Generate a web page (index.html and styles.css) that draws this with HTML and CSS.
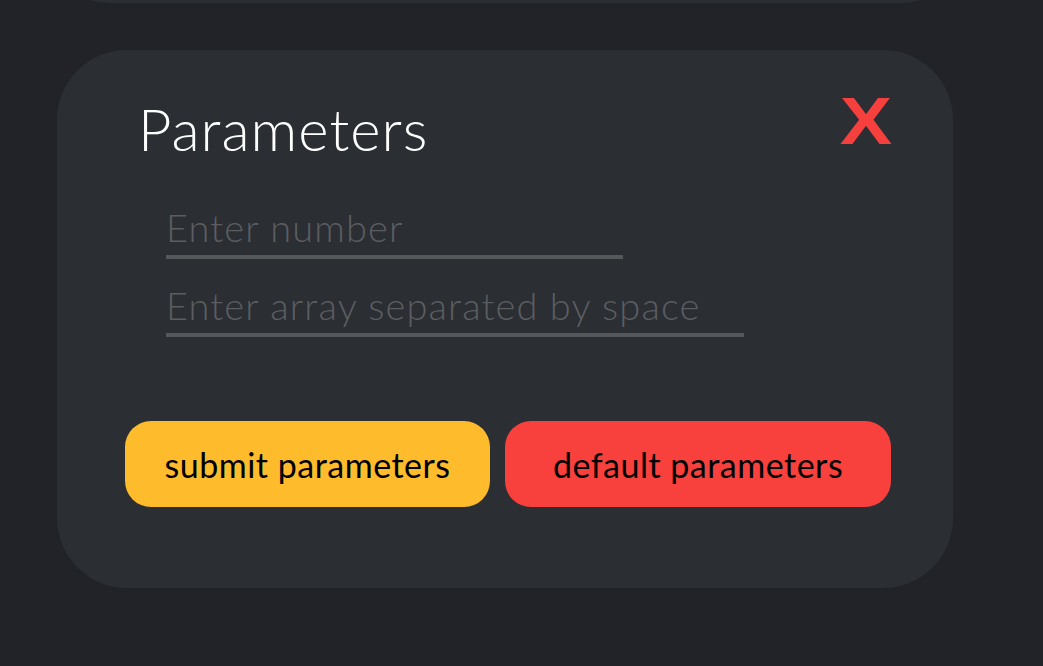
FILE: index.html
```html
<!DOCTYPE html>
<html lang="en">
<head>
    <meta charset="UTF-8">
    <meta name="viewport" content="width=device-width, initial-scale=1.0">
    <title>parameters</title>
    <link rel="stylesheet" href="styles.css">
</head>
<body>
    <div class="prev-card"></div>
    <div class="card">
        <div class="card-header">
            <h1 class="title">Parameters</h1>
            <button class="close-btn" id="closeBtn">X</button>
        </div>
        <div class="fields">
            <input type="text" class="field field-number" placeholder="Enter number">
            <input type="text" class="field field-array" placeholder="Enter array separated by space">
        </div>
        <div class="button-container">
            <button class="btn btn-submit">submit parameters</button>
            <button class="btn btn-default">default parameters</button>
        </div>
    </div>
</body>
</html>
```

FILE: styles.css
```css
body {
    font-family: Lato, "Noto Sans", sans-serif;
    margin: 0;
    height: 666px;
    overflow: hidden;
    background-color: #212328;
    color: #fff;
}
.prev-card {
    width: 896px;
    height: 100px;
    margin: -97px 0 0 57px;
    background-color: #2b2e33;
    border-radius: 70px;
}
.card {
    box-sizing: border-box;
    width: 896px;
    height: 538px;
    margin: 47px 0 0 57px;
    padding: 44px 61px 0 81px;
    background-color: #2b2e33;
    border-radius: 70px;
}
.card-header {
    display: flex;
    justify-content: space-between;
    align-items: flex-start;
}
.title {
    margin: 0;
    font-size: 58px;
    font-weight: 300;
    line-height: 70px;
    letter-spacing: 1px;
}
.close-btn {
    margin: -4px 0 0;
    padding: 0;
    border: none;
    background: none;
    color: #f5403e;
    font-family: "Liberation Sans", Arial, sans-serif;
    font-weight: 700;
    font-size: 66px;
    line-height: 62px;
    transform: scaleX(1.19);
    transform-origin: right center;
    cursor: pointer;
}
.fields {
    display: flex;
    flex-direction: column;
    align-items: flex-start;
    gap: 24px;
    margin: 41px 0 0 28px;
}
.field {
    box-sizing: border-box;
    height: 54px;
    padding: 0 0 6px;
    border: none;
    border-bottom: 4px solid #55575a;
    background: transparent;
    color: #fff;
    font-family: inherit;
    font-size: 38px;
    font-weight: 300;
    letter-spacing: 1.1px;
    outline: none;
}
.field::placeholder {
    color: #5b5d61;
}
.field-number {
    width: 457px;
}
.field-array {
    width: 578px;
}
.button-container {
    display: flex;
    gap: 15px;
    margin: 84px 0 0 -13px;
}
.btn {
    height: 86px;
    padding: 0;
    border: none;
    border-radius: 26px;
    color: #000;
    font-family: inherit;
    font-size: 34px;
    letter-spacing: 0.5px;
    cursor: pointer;
}
.btn-submit {
    width: 365px;
    background-color: #febc2c;
}
.btn-default {
    width: 386px;
    background-color: #f8403d;
}
```
